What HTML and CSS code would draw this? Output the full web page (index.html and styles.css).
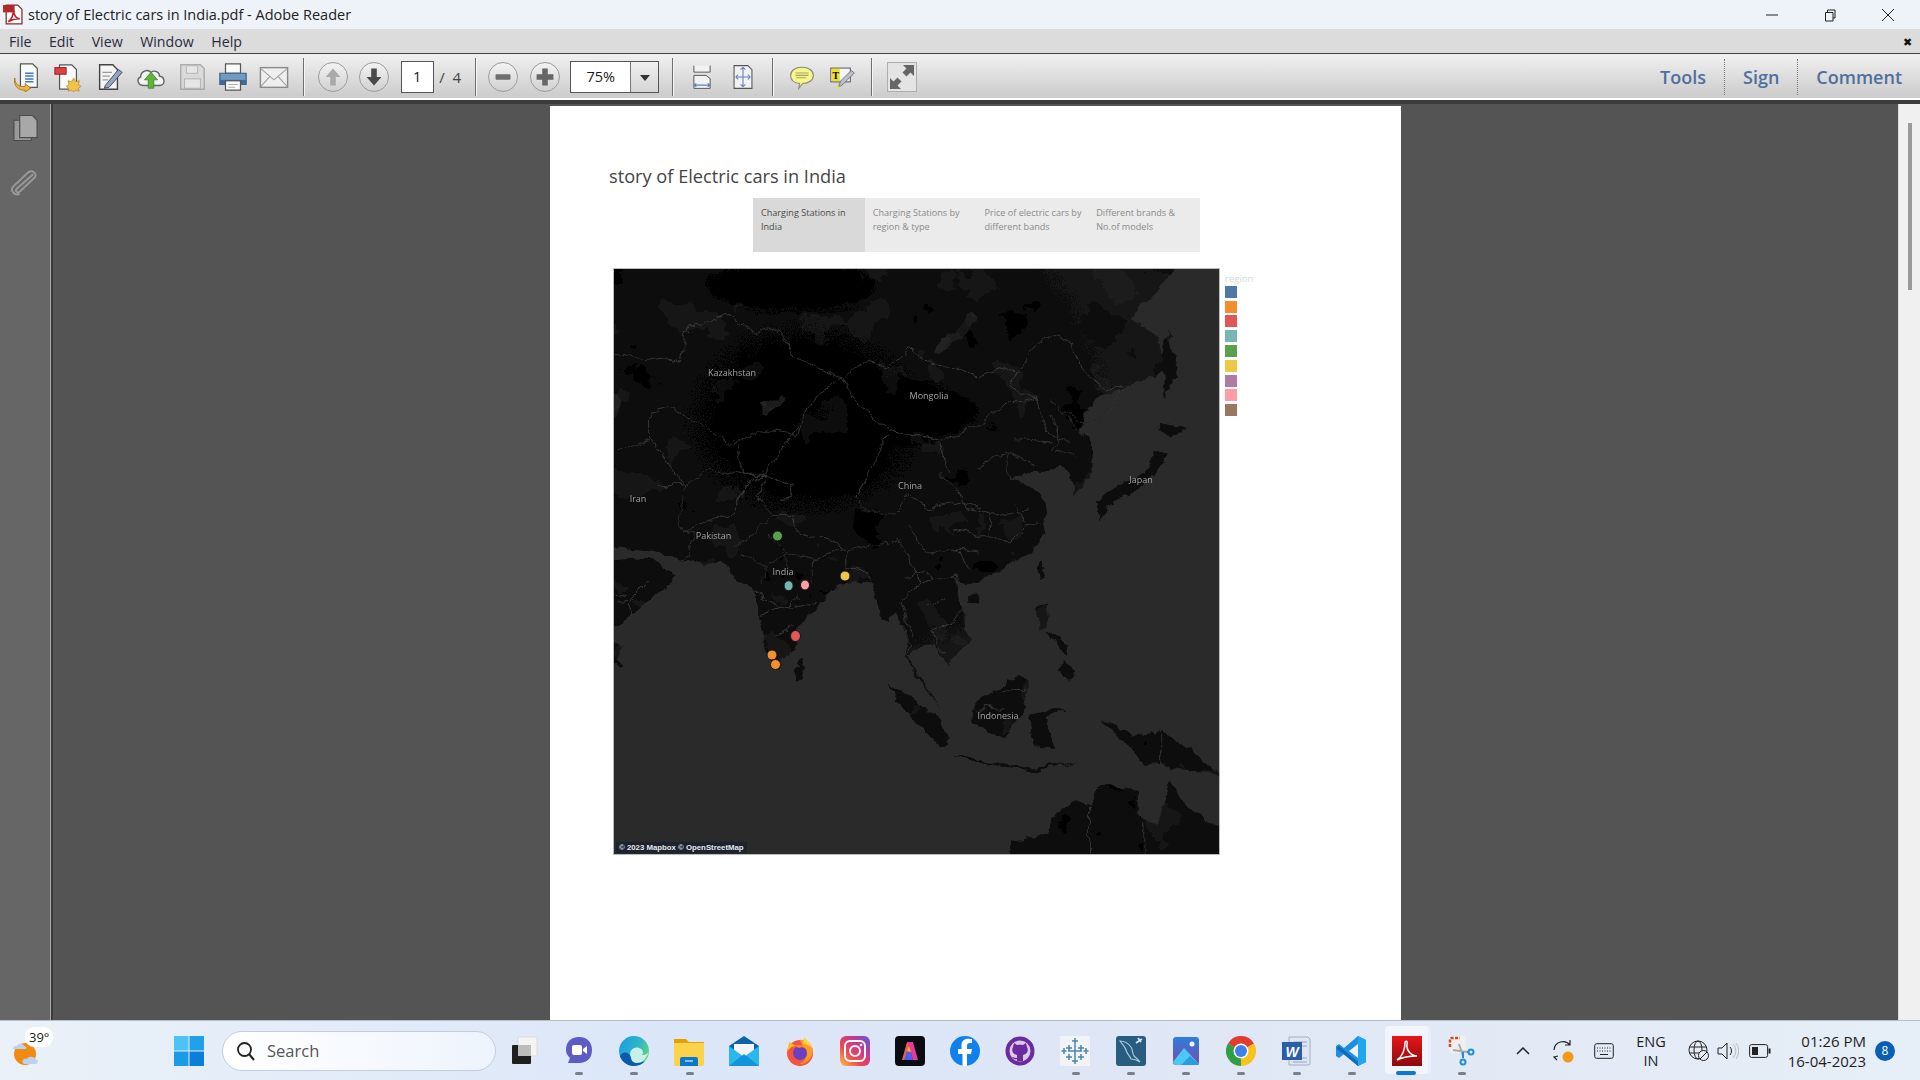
FILE: index.html
```html
<!DOCTYPE html>
<html lang="en">
<head>
    <meta charset="UTF-8">
    <title>story of Electric cars in India.pdf - Adobe Reader</title>
    <link rel="stylesheet" href="styles.css">
</head>
<body>
    <div class="window">
        <div class="titlebar">
            <svg class="pdf-icon" viewBox="0 0 20 20">
                <path d="M4 1h11l4 4v14H4z" fill="#fff" stroke="#8a2a2a" stroke-width="1.2"/>
                <rect x="1" y="1" width="11" height="7" fill="#b3262a"/>
                <path d="M6 17c3-2 5-7 5-11 0 5 3 8 6 8-4 0-8 1-11 3z" fill="none" stroke="#c01f24" stroke-width="1.5"/>
            </svg>
            <span class="title-text">story of Electric cars in India.pdf - Adobe Reader</span>
            <div class="win-controls">
                <svg viewBox="0 0 14 14"><path d="M1 7h12" stroke="#222" stroke-width="1" fill="none"/></svg>
                <svg viewBox="0 0 14 14"><path d="M2.5 4.5h7.5v8.500h-7.500zM4.500 4.500v-2.500h7.500v8h-2" stroke="#222" stroke-width="1" fill="none"/></svg>
                <svg viewBox="0 0 14 14"><path d="M1 1l12 12M13 1L1 13" stroke="#222" stroke-width="1" fill="none"/></svg>
            </div>
        </div>

        <div class="menubar">
            <span>File</span><span>Edit</span><span>View</span><span>Window</span><span>Help</span>
            <span class="menu-close">&#10006;</span>
        </div>

        <div class="toolbar">
            <div class="tool"><svg viewBox="0 0 32 32">
                <path d="M9 2h13l5 5v20H9z" fill="#fafafa" stroke="#555" stroke-width="1.300"/>
                <path d="M14 12h9M14 15h9M14 18h9M14 21h9" stroke="#3d78c9" stroke-width="1.600"/>
                <path d="M3 17c0 7 5 10 11 9v-3l6 5-6 4v-2C7 31 1 25 3 17z" fill="#f0b440" stroke="#9a6a10" stroke-width=".8"/>
            </svg></div>
            <div class="tool"><svg viewBox="0 0 32 32">
                <path d="M7 3h13l5 5v21H7z" fill="#fafafa" stroke="#555" stroke-width="1.300"/>
                <rect x="2" y="6" width="12" height="7" fill="#e04040" stroke="#8a1c1c"/>
                <path d="M22 17l2 4 4-1-1 4 3 2-3 2 1 3-4-1-2 2-2-2-4 1 1-3-3-2 3-2-1-4 4 1z" fill="#f3c24b" stroke="#b08420" stroke-width=".7"/>
            </svg></div>
            <div class="tool"><svg viewBox="0 0 32 32">
                <path d="M6 3h14l5 5v21H6z" fill="#f5f5f5" stroke="#444" stroke-width="1.500"/>
                <path d="M9 11h10M9 15h8M9 19h6" stroke="#999" stroke-width="1.300"/>
                <path d="M12 25L26 8l4 3-14 16-5 1z" fill="#8fa8c4" stroke="#445" stroke-width="1"/>
            </svg></div>
            <div class="tool"><svg viewBox="0 0 32 32">
                <path d="M8 25C2 25 0 18 5 16c0-6 7-9 11-5 4-3 9 0 9 4 6 1 7 10 0 10z" fill="#f2f2f2" stroke="#666" stroke-width="1.500"/>
                <path d="M16 11l7 8h-4v9h-6v-9H9z" fill="#5fb43a" stroke="#3a8020" stroke-width=".8"/>
            </svg></div>
            <div class="tool faded"><svg viewBox="0 0 32 32">
                <path d="M4 3h21l4 4v22H4z" fill="#d8d8d8" stroke="#9a9a9a" stroke-width="1.500"/>
                <rect x="10" y="4" width="12" height="8" fill="#e8e8e8" stroke="#a5a5a5"/>
                <rect x="8" y="18" width="17" height="10" fill="#eaeaea" stroke="#a5a5a5"/>
            </svg></div>
            <div class="tool"><svg viewBox="0 0 32 32">
                <rect x="8" y="2" width="16" height="10" fill="#fafafa" stroke="#555" stroke-width="1.300"/>
                <path d="M2 12h28v12H2z" fill="#6f9bc4" stroke="#3e5f80" stroke-width="1.300"/>
                <path d="M2 19h28v5H2z" fill="#3f6a96"/>
                <rect x="8" y="20" width="16" height="10" fill="#fafafa" stroke="#555" stroke-width="1.300"/>
                <path d="M11 24h10M11 27h7" stroke="#aaa"/>
            </svg></div>
            <div class="tool"><svg viewBox="0 0 32 32">
                <rect x="1.500" y="6" width="29" height="21" fill="#efefef" stroke="#8a8a8a" stroke-width="1.500"/>
                <path d="M2 7l14 12L30 7M2 26l10-11M30 26L20 15" fill="none" stroke="#a0a0a0" stroke-width="1.200"/>
            </svg></div>
            <i class="sep first-sep"></i>
            <div class="tool round faded-round"><svg viewBox="0 0 30 30"><path d="M15 6l8 9h-5v9h-6v-9H7z" fill="#a9a9a9"/></svg></div>
            <div class="tool round"><svg viewBox="0 0 30 30"><path d="M15 24l-8-9h5V6h6v9h5z" fill="#4a4a4a"/></svg></div>
            <div class="page-box">1</div>
            <span class="page-count">/ 4</span>
            <i class="sep"></i>
            <div class="tool round faded-round zoom-first"><svg viewBox="0 0 30 30"><rect x="7" y="12" width="16" height="6" rx="1" fill="#6e6e6e"/></svg></div>
            <div class="tool round faded-round"><svg viewBox="0 0 30 30"><path d="M12 6h6v6h6v6h-6v6h-6v-6H6v-6h6z" fill="#666"/></svg></div>
            <div class="zoom-box">
                <span class="zoom-value">75%</span>
                <span class="zoom-arrow"></span>
            </div>
            <i class="sep"></i>
            <div class="tool small"><svg viewBox="0 0 32 32">
                <path d="M6 2v8h20V2M6 14h15l5 4v12H6z" fill="#f2f2f2" stroke="#555" stroke-width="1.200"/>
                <path d="M6 26h20M6 26l3-2M6 26l3 2M26 26l-3-2M26 26l-3 2" stroke="#5d80bb" fill="none" stroke-width="1.300"/>
            </svg></div>
            <div class="tool small"><svg viewBox="0 0 32 32">
                <path d="M5 2h17l5 5v23H5z" fill="#f2f2f2" stroke="#555" stroke-width="1.300"/>
                <path d="M16 4v24M7 16h18M16 4l-3 3M16 4l3 3M16 28l-3-3M16 28l3-3M7 16l3-3M7 16l3 3M25 16l-3-3M25 16l-3 3" stroke="#5d80bb" fill="none" stroke-width="1.300"/>
            </svg></div>
            <i class="sep"></i>
            <div class="tool small"><svg viewBox="0 0 32 32">
                <path d="M16 4c8 0 14 4 14 10s-6 10-13 10l-5 6 1-6C6 23 2 19 2 14 2 8 8 4 16 4z" fill="#f7f590" stroke="#8a8a70" stroke-width="1.300"/>
                <path d="M8 11h16M8 14h16M9 17h12" stroke="#a6a45a" stroke-width="1.300"/>
            </svg></div>
            <div class="tool small"><svg viewBox="0 0 32 32">
                <rect x="1" y="5" width="24" height="17" fill="#f5f5f5" stroke="#555" stroke-width="1.200"/>
                <rect x="2" y="6" width="10" height="15" fill="#f0e020"/>
                <text x="7" y="18" class="t-glyph">T</text>
                <path d="M10 29l3-8 13-13 4 3-14 14z" fill="#b9c0c9" stroke="#666"/>
                <circle cx="10" cy="29" r="2" fill="#e8df50"/>
            </svg></div>
            <i class="sep"></i>
            <div class="tool expand"><svg viewBox="0 0 30 30">
                <rect x=".5" y=".5" width="29" height="29" fill="#e4e4e4" stroke="#adadad"/>
                <path d="M27 3v11l-3.500-3.500-4 4-4-4 4-4L16 3zM3 27V16l3.500 3.500 4-4 4 4-4 4L14 27z" fill="#666"/>
            </svg></div>
            <div class="side-links">
                <span class="side-link">Tools</span>
                <span class="side-link">Sign</span>
                <span class="side-link">Comment</span>
            </div>
        </div>

        <div class="workspace">
            <div class="nav-panel">
                <svg class="nav-pages" viewBox="0 0 28 28">
                    <path d="M2 6h18v21H2z" fill="#9a9a9a" stroke="#4c4c4c" stroke-width="1.200"/>
                    <path d="M8 1h13l5 5v18H8z" fill="#a8a8a8" stroke="#4c4c4c" stroke-width="1.200"/>
                </svg>
                <svg class="nav-clip" viewBox="0 0 28 28">
                    <path d="M24 6L7 21c-2 2 0 5 3 3L26 9c2-4-3-8-7-5L3 19c-3 4 2 10 7 7" fill="none" stroke="#999" stroke-width="2"/>
                </svg>
            </div>
            <div class="viewer">
                <div class="pdf-page">
                    <h1 class="story-title">story of Electric cars in India</h1>
                    <div class="story-tabs">
                        <div class="story-tab active">Charging Stations in India</div>
                        <div class="story-tab">Charging Stations by region &amp; type</div>
                        <div class="story-tab">Price of electric cars by different bands</div>
                        <div class="story-tab">Different brands &amp; No.of models</div>
                    </div>
                    <div class="viz">
                        <div class="map-frame">
                            <svg class="map" viewBox="614 269 605 585">
                                <defs>
                                    <radialGradient id="landShade" gradientUnits="userSpaceOnUse" cx="500" cy="-100" r="950">
                                        <stop offset="0" stop-color="#0e0e0e"/>
                                        <stop offset=".55" stop-color="#151515"/>
                                        <stop offset="1" stop-color="#1e1e1e"/>
                                    </radialGradient>
                                    <filter id="terrain" x="0" y="0" width="100%" height="100%">
                                        <feTurbulence type="fractalNoise" baseFrequency=".02" numOctaves="4" seed="7" result="noise"/>
                                        <feColorMatrix in="noise" type="matrix" values="0 0 0 0 0  0 0 0 0 0  0 0 0 0 0  1.300 0 0 0 -.42" result="shade"/>
                                        <feComposite in="shade" in2="SourceAlpha" operator="in" result="dark"/>
                                        <feMerge><feMergeNode in="SourceGraphic"/><feMergeNode in="dark"/></feMerge>
                                    </filter>
                                    <filter id="rough" x="0" y="0" width="100%" height="100%">
                                        <feTurbulence type="turbulence" baseFrequency=".045" numOctaves="3" seed="3" result="wobble"/>
                                        <feDisplacementMap in="SourceGraphic" in2="wobble" scale="9" xChannelSelector="R" yChannelSelector="G"/>
                                    </filter>
                                    <filter id="soft" x="-50%" y="-50%" width="200%" height="200%"><feGaussianBlur stdDeviation="16"/></filter>
                                </defs>
                                <rect x="614" y="269" width="605" height="585" fill="#2a2a2a"/>
                                <g filter="url(#rough)">
                                    <g filter="url(#terrain)">
                                        <g transform="translate(600 450) scale(.408 .3333)">
                                            <path fill="url(#landShade)" d="M-30-590H1420L1400-542 1357-480 1293-400 1340-370 1367-340 1385-250 1300-200 1280-195 1210-160 1180-100 1170-60 1190-50 1205 0 1195 70 1160 130 1150 60 1120 40 1090 60 1040 60 1000 90 1050 100 1090 150 1085 230 1050 300 990 340 925 395 880 390 855 365 870 420 880 470 905 560 850 635 815 570 800 575 770 600 750 620 790 690 830 765 790 700 745 620 750 560 725 480 690 505 660 400 640 390 620 395 590 390 530 460 485 515 470 590 440 620 430 655 410 610 370 420 335 390 305 345 210 325 120 295 20 285-30 285z"/>
                                            <path fill="#141414" d="M-30 330 120 318 178 380 110 450 35 522-30 530z"/>
                                            <path fill="#171717" d="M-30 590 50 578 45 640-30 660z"/>
                                            <g fill="#171717">
                                                <path d="M485 618 500 655 497 678 482 686 473 650z"/>
                                                <path d="M700 695 760 738 830 800 856 880 830 885 770 810 725 745z"/>
                                                <path d="M855 905 960 940 1000 945 1060 950 1160 935 1070 958 990 950 900 930z"/>
                                                <path d="M905 772 945 735 1020 672 1048 700 1030 790 990 862 920 820z"/>
                                                <path d="M1055 785 1135 770 1085 800 1110 890 1060 892 1048 830z"/>
                                                <path d="M1220 800 1300 850 1370 838 1440 890 1540 990 1490 960 1400 950 1330 940 1290 880z"/>
                                                <path d="M985 1240 1010 1170 1090 1150 1110 1090 1160 1050 1200 1060 1215 1000 1310 1010 1310 1080 1360 1120 1392 990 1430 1060 1540 1150 1540 1240z"/>
                                                <path d="M1070 458 1095 458 1092 530 1072 530z"/>
                                                <path d="M1090 540 1142 580 1140 605 1105 570z"/>
                                                <path d="M1130 622 1160 660 1142 686 1120 650z"/>
                                                <path d="M1080 325 1088 360 1070 382z"/>
                                                <path d="M900 430 925 428 916 456 900 456z"/>
                                                <path d="M1350 0 1386 0 1380 40 1290 130 1222 172 1210 150 1240 115 1300 90 1340 50z"/>
                                                <path d="M1210 160 1236 170 1222 202z"/>
                                                <path d="M1365-90 1435-75 1395-50 1365-60z"/>
                                                <path d="M1390-370 1410-250 1385-160 1372-260z"/>
                                            </g>
                                            <g filter="url(#soft)" fill="#000" opacity=".5">
                                                <ellipse cx="650" cy="-120" rx="260" ry="70"/>
                                                <ellipse cx="520" cy="30" rx="140" ry="70"/>
                                                <ellipse cx="460" cy="-500" rx="200" ry="50"/>
                                            </g>
                                            <path class="lake" d="M905-420 918-405 880-340 830-295 810-300 850-345z"/>
                                            <path class="lake" d="M-30-180 40-175 50-120 20-90-30-100z"/>
                                            <path class="lake" d="M385-155 455-165 440-130 395-110z"/>
                                            <g class="borders">
                                                <path d="M35-295 71-295 103-270 156-280 194-270 204-330 199-365 315-410 347-380 379-355 432-370 475-280 496-275 550-240 586-225M586-225 655-270 698-250 756-310 804-260 879-250 921-225 974-250 1017-240 1070-330 1113-355 1155-330 1182-240 1230-190 1282-200 1240-110 1176-90 1130-120 1102-160"/>
                                                <path d="M586-225 634-130 709-65 836-35 932-80 953-120 1060-165 1007-190 1012-240"/>
                                                <path d="M586-225 528-170 485-80 475-50 390-65 305-20 252-80 162-130 119-115 119-40 35 0"/>
                                                <path d="M200 100 190 200 200 235 230 240 205 320M200 235 260 210 320 190 350 100 400 70 465 100 470 130 440 140M200 100 260 50 350 70 400 70M120-40 200 100M350 70 330-20M400 70 480-80M140 100 195 100"/>
                                                <path d="M320 290 380 230 420 190 470 190 480 240 580 270 600 300 640 290 730 260 750 310 780 400 730 450 760 560 750 620M400 80 380 130 420 190"/>
                                                <path d="M600 300 600 350 650 360 660 400M780 400 810 380 870 370 880 470 850 520 810 540 830 590 850 600M790 470 840 440M810 380 790 350 740 380"/>
                                                <path d="M340 310 400 340 450 300 520 320 590 290M370 420 440 470 530 450M390 490 450 470 480 430M430 550 470 520M440 300 470 370M520 320 510 400M410 240 450 300M400 340 390 400"/>
                                                <path d="M620 130 640 170 720 190 750 130 800 170 880 150 930 170M750 220 800 300 870 290 920 300M860 230 950 260 1000 270M900 170 960 190 1050 170M830 60 860 100 900 170M990 0 1000 90M920 50 990 0 1060 40M1000 270 1040 220 1080 210M1100-110 1120-40 1100 0M830-30 850 60M700-60 650 70 620 130M960 190 950 260M870 290 900 360M1040 220 1010 160"/>
                                                <path d="M1060-165 1090-60 1150-30M1010-40 1100-30M1110 0 1160 10M1130-120 1180-50"/>
                                                <path d="M35 450 70 445 115 390M65 450 75 490M-30 420 60 430"/>
                                                <path d="M985 720 1000 710 1040 715M915 775 985 770M1372 840 1372 955M1195 1060 1195 1210M1328 1110 1328 1210"/>
                                            </g>
                                        </g>
                                    </g>
                                </g>
                                <g class="map-labels">
                                    <text x="732" y="376">Kazakhstan</text>
                                    <text x="929" y="399">Mongolia</text>
                                    <text x="910" y="489">China</text>
                                    <text x="1141" y="483">Japan</text>
                                    <text x="638" y="502">Iran</text>
                                    <text x="713.500" y="539">Pakistan</text>
                                    <text x="783" y="575">India</text>
                                    <text x="998" y="719">Indonesia</text>
                                </g>
                                <g class="marks">
                                    <ellipse cx="777.500" cy="536" rx="5" ry="5" fill="#59a14f"/>
                                    <ellipse cx="845" cy="576" rx="5" ry="5" fill="#edc948"/>
                                    <ellipse cx="788.600" cy="585.700" rx="4.500" ry="5" fill="#76b7b2"/>
                                    <ellipse cx="805" cy="585" rx="4.500" ry="5" fill="#ff9da7"/>
                                    <ellipse cx="795.500" cy="636" rx="5" ry="5.500" fill="#e15759"/>
                                    <ellipse cx="772" cy="655" rx="5" ry="5" fill="#f28e2b"/>
                                    <ellipse cx="775.500" cy="664.500" rx="5" ry="5" fill="#f28e2b"/>
                                </g>
                            </svg>
                            <span class="attribution">&copy; 2023 Mapbox &copy; OpenStreetMap</span>
                        </div>
                        <div class="legend">
                            <div class="legend-title">region</div>
                            <i class="swatch c1"></i>
                            <i class="swatch c2"></i>
                            <i class="swatch c3"></i>
                            <i class="swatch c4"></i>
                            <i class="swatch c5"></i>
                            <i class="swatch c6"></i>
                            <i class="swatch c7"></i>
                            <i class="swatch c8"></i>
                            <i class="swatch c9"></i>
                        </div>
                    </div>
                </div>
            </div>
            <div class="scrollbar"><div class="thumb"></div></div>
        </div>

        <div class="taskbar">
            <div class="weather">
                <svg viewBox="0 0 32 32">
                    <circle cx="14" cy="17" r="11" fill="#f08a12"/>
                    <path d="M2 12c0-3 3-4 4-3 1-3 6-3 7 0 2 0 3 2 2 3z" fill="#bcd3f0"/>
                    <path d="M12 26c-2-3 2-5 4-4 1-3 7-3 8 0 3 0 4 4 1 5H13z" fill="#bcd3f0"/>
                </svg>
                <span class="temp">39&deg;</span>
            </div>
            <svg class="start" viewBox="0 0 30 30">
                <rect x="0" y="0" width="14.500" height="14.500" fill="#4cc2f5"/>
                <rect x="15.500" y="0" width="14.500" height="14.500" fill="#22a0ea"/>
                <rect x="0" y="15.500" width="14.500" height="14.500" fill="#1b9be6"/>
                <rect x="15.500" y="15.500" width="14.500" height="14.500" fill="#0a7fd8"/>
            </svg>
            <div class="search">
                <svg viewBox="0 0 20 20"><circle cx="8.500" cy="8.500" r="6.500" fill="none" stroke="#222" stroke-width="1.800"/><path d="M13 13l5 6" stroke="#222" stroke-width="2"/></svg>
                <span>Search</span>
            </div>
            <div class="apps">
                <div class="app"><svg viewBox="0 0 30 30">
                    <rect x="9" y="1" width="19" height="19" rx="1" fill="#f4f4f4" stroke="#dcdcdc"/>
                    <rect x="3" y="9" width="19" height="19" rx="1" fill="#1f1f1f"/>
                    <rect x="9" y="9" width="13" height="11" fill="#bdbdbd"/>
                </svg></div>
                <div class="app dot"><svg viewBox="0 0 30 30">
                    <path d="M15 1c9 0 13 6 13 13 0 8-5 13-13 13H4l2-5C3 19 2 17 2 14 2 6 7 1 15 1z" fill="#5d5bc4"/>
                    <rect x="8" y="9" width="10" height="10" rx="2" fill="#fff"/>
                    <path d="M19 13l4-3v8l-4-3z" fill="#fff"/>
                </svg></div>
                <div class="app dot"><svg viewBox="0 0 30 30">
                    <defs><linearGradient id="edgeGrad" x1="0" y1=".2" x2="1" y2=".6">
                        <stop offset="0" stop-color="#1b9de2"/><stop offset=".6" stop-color="#2cb7c8"/><stop offset="1" stop-color="#5fd67e"/>
                    </linearGradient></defs>
                    <circle cx="15" cy="15" r="15" fill="url(#edgeGrad)"/>
                    <path d="M12 22c-3-6 2-12 8-10 4 1 5 5 3 7 4 0 7-2 7-5-2 13-16 18-18 8z" fill="#c9efe9"/>
                    <path d="M1 20c3 10 17 14 25 5-6 3-14 3-14-3-1-6-8-8-11-2z" fill="#0c5aa8"/>
                </svg></div>
                <div class="app dot"><svg viewBox="0 0 30 30">
                    <path d="M0 3h12l3 3h15v22H0z" fill="#e0a208"/>
                    <path d="M0 7h30v21a2 2 0 0 1-2 2H2a2 2 0 0 1-2-2z" fill="#fad34a"/>
                    <path d="M8 21h14a2 2 0 0 1 2 2v7H6v-7a2 2 0 0 1 2-2z" fill="#0e78c8"/>
                    <rect x="11" y="24" width="8" height="2" fill="#7dc5f0"/>
                </svg></div>
                <div class="app"><svg viewBox="0 0 30 30">
                    <path d="M0 10L15 0l15 10v20H0z" fill="#0b62ad"/>
                    <path d="M5 8h20v12H5z" fill="#f4f4f4"/>
                    <path d="M0 10l15 11 15-11v20H0z" fill="#29b7ee"/>
                    <path d="M0 30l15-12 15 12z" fill="#1293dc"/>
                </svg></div>
                <div class="app"><svg viewBox="0 0 30 30">
                    <circle cx="15" cy="17" r="13" fill="#f6533f"/>
                    <path d="M15 4c5-1 11 4 13 9 0 8-5 15-13 15C22 24 24 16 18 11z" fill="#ff9a25"/>
                    <path d="M4 6c0 4-2 6-2 10 2-4 5-6 9-6z" fill="#ffbb28"/>
                    <path d="M19 0c1 4 7 6 8 12-3-3-6-4-9-4 0-3 1-5 1-8z" fill="#ffd43c"/>
                    <circle cx="15" cy="17" r="7" fill="#6a3fc4"/>
                    <path d="M10 10c3-2 9-1 11 3-3-2-5-2-7-1z" fill="#ff8a20"/>
                </svg></div>
                <div class="app"><svg viewBox="0 0 30 30">
                    <defs><linearGradient id="instaGrad" x1="0" y1="1" x2="1" y2="0">
                        <stop offset="0" stop-color="#fdc24a"/><stop offset=".35" stop-color="#ee4a4e"/><stop offset=".7" stop-color="#c0379a"/><stop offset="1" stop-color="#5a5dd2"/>
                    </linearGradient></defs>
                    <rect width="30" height="30" rx="6" fill="url(#instaGrad)"/>
                    <rect x="5" y="5" width="20" height="20" rx="5" fill="none" stroke="#fff" stroke-width="2"/>
                    <circle cx="15" cy="15" r="5" fill="none" stroke="#fff" stroke-width="2"/>
                    <circle cx="21" cy="9" r="1.300" fill="#fff"/>
                </svg></div>
                <div class="app"><svg viewBox="0 0 30 30">
                    <rect width="30" height="30" rx="4" fill="#0b0b12"/>
                    <path d="M12 6h6l-2 7-4 11H7z" fill="#f2613f"/>
                    <path d="M12 6h6l5 18h-5z" fill="#e6399b"/>
                    <path d="M12 15l4 1 2 8H9z" fill="#4b5ef0"/>
                    <path d="M12 15l2-5 2 6z" fill="#f5b32e"/>
                </svg></div>
                <div class="app"><svg viewBox="0 0 30 30">
                    <circle cx="15" cy="15" r="15" fill="#1080ea"/>
                    <path d="M17 30V18h4l1-5h-5v-3c0-2 1-3 3-3h2V3c-1 0-3-.300-4-.300-4 0-6.500 2.500-6.500 6.500v3.800H8v5h4.500v12z" fill="#fff"/>
                </svg></div>
                <div class="app"><svg viewBox="0 0 30 30">
                    <circle cx="15" cy="15" r="14.500" fill="#6b2a9e"/>
                    <circle cx="15" cy="15" r="10.500" fill="#d9cbe6"/>
                    <path d="M9 7l3 2c2-.500 4-.500 6 0l3-2 1 4c2 4 0 7-4 8v6h-6v-2c-3 1-4-1-5-2 2 0 2 1 5 1v-3c-4-1-6-4-4-8z" fill="#6b2a9e"/>
                </svg></div>
                <div class="app dot"><svg viewBox="0 0 30 30">
                    <rect width="30" height="30" fill="#f1f3f4"/>
                    <g stroke="#4a86ad" stroke-width="1.500">
                        <path d="M15 8v14M8 15h14M9 9v6M6 12h6M21 9v6M18 12h6M9 18v6M6 21h6M21 18v6M18 21h6M15 2v6M12 5h6M15 22v6M12 25h6M4 12v6M1.500 15h5M26 12v6M23.500 15h5"/>
                    </g>
                </svg></div>
                <div class="app dot"><svg viewBox="0 0 30 30">
                    <rect width="30" height="30" rx="3" fill="#285d80"/>
                    <path d="M4 5c4 0 8 2 11 6 2 3 1 6 3 9 2 2 4 3 6 6-3-2-6-3-9-3-1-3-4-5-5-9C9 10 6 8 4 5z" fill="none" stroke="#a9c7da" stroke-width="1.200"/>
                    <path d="M22 2l3 4M20 7l6-4" stroke="#d7e5ee" stroke-width="1.800"/>
                </svg></div>
                <div class="app dot"><svg viewBox="0 0 30 30">
                    <defs><linearGradient id="photoGrad" x1="0" y1="0" x2="0" y2="1">
                        <stop offset="0" stop-color="#2c7fd8"/><stop offset="1" stop-color="#7a4bb5"/>
                    </linearGradient></defs>
                    <rect x="2" y="1" width="26" height="28" rx="3" fill="url(#photoGrad)"/>
                    <circle cx="21" cy="8" r="2.500" fill="#f1f1f1"/>
                    <path d="M2 26l11-14 15 16-1 1H4z" fill="#4cc8f4"/>
                    <path d="M10 29l9-9 9 8-1 1z" fill="#2a9ce0"/>
                </svg></div>
                <div class="app dot"><svg viewBox="0 0 30 30">
                    <path d="M15 15L28 7.500A15 15 0 0 0 2 7.500z" fill="#e33b2e"/>
                    <path d="M15 15L2 7.500A15 15 0 0 0 15 30z" fill="#2f9e44"/>
                    <path d="M15 15L15 30A15 15 0 0 0 28 7.500z" fill="#f9c31e"/>
                    <circle cx="15" cy="15" r="7.500" fill="#fff"/>
                    <circle cx="15" cy="15" r="6" fill="#3f7fe8"/>
                </svg></div>
                <div class="app dot"><svg viewBox="0 0 30 30">
                    <path d="M8 1h19l2 2v25l-2 1H8z" fill="#dfe6f2" stroke="#9fb0c8"/>
                    <path d="M12 6h14M12 10h14M12 22h14M12 26h14" stroke="#8ea6cc"/>
                    <rect x="1" y="6" width="20" height="18" fill="#2a5ea8"/>
                    <text x="11" y="21" class="word-glyph">W</text>
                </svg></div>
                <div class="app dot"><svg viewBox="0 0 30 30">
                    <path d="M22 0l8 4v22l-8 4-14-12-5 4-3-2v-10l3-2 5 4z" fill="#1d8fe0"/>
                    <path d="M22 0v30l8-4V4z" fill="#1fa6ef"/>
                    <path d="M22 8l-9 7 9 7z" fill="#eef3fa"/>
                    <path d="M3 10l19 16v4L0 12z" fill="#0a6cbb"/>
                </svg></div>
                <div class="app active"><svg viewBox="0 0 30 30">
                    <defs><linearGradient id="acroGrad" x1="0" y1="0" x2="0" y2="1">
                        <stop offset="0" stop-color="#e8161a"/><stop offset="1" stop-color="#8c0a0c"/>
                    </linearGradient></defs>
                    <rect width="30" height="30" fill="url(#acroGrad)"/>
                    <path d="M5 24c5-3 8-10 8-17 0-3 3-2 2 1-1 6 4 12 10 12-7 0-14 1-20 4z" fill="none" stroke="#fff" stroke-width="1.500"/>
                </svg></div>
                <div class="app dot"><svg viewBox="0 0 30 30">
                    <rect x="2" y="0" width="17" height="17" rx="2" fill="#eef0ee"/>
                    <path d="M3 11V3a1 1 0 0 1 1-1h9" fill="none" stroke="#d9442f" stroke-width="2.500" stroke-dasharray="3 1.500"/>
                    <path d="M12 8l4 12M6 14l14 2" stroke="#a9a9a9" stroke-width="2"/>
                    <circle cx="24" cy="16" r="2.500" fill="none" stroke="#1f8fd8" stroke-width="2"/>
                    <circle cx="16" cy="26" r="2.500" fill="none" stroke="#1f8fd8" stroke-width="2"/>
                    <path d="M16 22v-6M20 16h2" stroke="#1f8fd8" stroke-width="2"/>
                </svg></div>
            </div>
            <div class="tray">
                <svg class="chevron" viewBox="0 0 14 8"><path d="M1 7l6-6 6 6" fill="none" stroke="#222" stroke-width="1.500"/></svg>
                <svg class="sync" viewBox="0 0 24 24">
                    <path d="M2 11a9 9 0 0 1 16-5M18 1v5h-5M5 21l-3-3 4-1" fill="none" stroke="#222" stroke-width="1.200"/>
                    <circle cx="16" cy="18" r="5.500" fill="#f39a12"/>
                </svg>
                <svg class="keyboard" viewBox="0 0 20 16">
                    <rect x=".7" y=".7" width="18.600" height="14.600" rx="2" fill="none" stroke="#222"/>
                    <path d="M3 5h14M3 8h14" stroke="#222" stroke-dasharray="1 1.500"/>
                    <path d="M6 11.500h8" stroke="#222"/>
                </svg>
                <div class="lang">ENG<br>IN</div>
                <svg class="globe" viewBox="0 0 22 22">
                    <circle cx="10" cy="10" r="9" fill="none" stroke="#222"/>
                    <ellipse cx="10" cy="10" rx="4" ry="9" fill="none" stroke="#222"/>
                    <path d="M1.500 7h17M1.500 13h17" stroke="#222"/>
                    <circle cx="15.500" cy="15.500" r="5" fill="#e6edf7" stroke="#222"/>
                    <path d="M12 19l7-7" stroke="#222"/>
                </svg>
                <svg class="volume" viewBox="0 0 22 20">
                    <path d="M1 7h4l5-5v16l-5-5H1z" fill="none" stroke="#222"/>
                    <path d="M13 6a6 6 0 0 1 0 8" fill="none" stroke="#222"/>
                    <path d="M16 3a10 10 0 0 1 0 14M19 2a13 13 0 0 1 0 16" fill="none" stroke="#bbb"/>
                </svg>
                <svg class="battery" viewBox="0 0 22 14">
                    <rect x=".6" y=".6" width="18" height="12.800" rx="2" fill="none" stroke="#222"/>
                    <rect x="3" y="3" width="6" height="8" fill="#222"/>
                    <rect x="19.500" y="4.500" width="2" height="5" fill="#222"/>
                </svg>
                <div class="clock">01:26 PM<br>16-04-2023</div>
                <span class="badge">8</span>
            </div>
        </div>
    </div>
</body>
</html>
```

FILE: styles.css
```css
* {
    box-sizing: border-box;
}
html, body {
    margin: 0;
    height: 100%;
    overflow: hidden;
}
body {
    font-family: "Open Sans", "Noto Sans", sans-serif;
    color: #1a1a1a;
}
svg {
    display: block;
}
.window {
    width: 1920px;
    height: 1080px;
    display: flex;
    flex-direction: column;
}

/* title bar */
.titlebar {
    height: 29px;
    background: #eef3fa;
    display: flex;
    align-items: center;
    padding-left: 2px;
}
.pdf-icon {
    width: 21px;
    height: 21px;
}
.title-text {
    margin-left: 5px;
    font-size: 14.5px;
    color: #222;
}
.win-controls {
    margin-left: auto;
    display: flex;
    align-items: center;
    gap: 44px;
    padding-right: 25px;
}
.win-controls svg {
    width: 14px;
    height: 14px;
}

/* menu */
.menubar {
    height: 25px;
    background: #dcdcdc;
    border-bottom: 1px solid #444;
    display: flex;
    align-items: center;
    padding-left: 9px;
    gap: 17.500px;
    font-size: 14.200px;
    color: #2a2a40;
}
.menu-close {
    margin-left: auto;
    margin-right: 8px;
    font-size: 11px;
    color: #111;
}

/* toolbar */
.toolbar {
    height: 50px;
    background: linear-gradient(#f1f1f1, #cdcdcd 90%, #cdcdcd 90%);
    border-bottom: 4px solid #3c3c3c;
    box-shadow: inset 0 -2px 0 #fff;
    display: flex;
    align-items: center;
    padding: 0 0 1px 6px;
}
.tool {
    width: 41.300px;
    display: flex;
    justify-content: center;
}
.tool svg {
    width: 30px;
    height: 30px;
}
.tool.faded {
    opacity: .75;
}
.tool.round svg {
    border-radius: 50%;
    border: 1.500px solid #9c9c9c;
    background: linear-gradient(#f3f3f3, #d0d0d0);
}
.faded-round svg {
    border-color: #b5b5b5;
}
.tool.small svg {
    width: 26px;
    height: 30px;
}
.tool.expand {
    width: 30px;
    margin-left: 7px;
}
.sep {
    width: 1px;
    height: 38px;
    background: #6f6f6f;
    box-shadow: 1px 0 0 #f5f5f5;
    margin: 0 8px;
}
.first-sep {
    margin-right: 8px;
}
.page-box {
    width: 33px;
    height: 32px;
    margin-left: 6px;
    background: #fff;
    border: 1px solid #555;
    display: flex;
    align-items: center;
    justify-content: center;
    font-size: 14.500px;
}
.page-count {
    width: 33px;
    text-align: center;
    font-size: 15px;
    word-spacing: 4px;
    color: #444;
}
.zoom-first {
    margin-left: -1px;
}
.zoom-box {
    width: 89px;
    height: 32px;
    margin-left: 5px;
    margin-right: 5px;
    display: flex;
    background: #fff;
    border: 1px solid #555;
}
.zoom-value {
    width: 60px;
    display: flex;
    align-items: center;
    justify-content: center;
    font-size: 14.500px;
    border-right: 1px solid #777;
}
.zoom-arrow {
    flex: 1;
    background: linear-gradient(#f0f0f0, #d5d5d5);
    position: relative;
}
.zoom-arrow::after {
    content: "";
    position: absolute;
    left: 9px;
    top: 13px;
    border: 5px solid transparent;
    border-top: 6px solid #333;
    border-bottom: 0;
}
.side-links {
    margin-left: auto;
    display: flex;
    align-items: center;
    height: 38px;
    padding-right: 18px;
}
.side-link {
    font-size: 18px;
    font-weight: 600;
    color: #4f6f9c;
    padding: 6px 18px;
    border-left: 1px dotted #777;
}
.side-link:first-child {
    border-left: 0;
}
.side-link:last-child {
    padding-right: 0;
}

/* document area */
.workspace {
    flex: 1;
    display: flex;
    min-height: 0;
    background: #545454;
}
.nav-panel {
    width: 53px;
    background: #666;
    border-right: 2px solid #3a3a3a;
    box-shadow: inset -1px 0 0 #a8a8a8;
    display: flex;
    flex-direction: column;
    align-items: flex-start;
    padding: 10px 0 0 12px;
}
.nav-pages {
    width: 27px;
    height: 28px;
}
.nav-clip {
    width: 27px;
    height: 28px;
    margin-top: 26px;
    margin-left: -2px;
}
.viewer {
    flex: 1;
    padding: 2px 0 0 497px;
    overflow: hidden;
}
.pdf-page {
    width: 851px;
    height: 100%;
    background: #fff;
    padding: 58px 0 0 59px;
}
.story-title {
    margin: 0;
    height: 34px;
    line-height: 24px;
    font-size: 18.200px;
    font-weight: 400;
    color: #444;
}
.story-tabs {
    margin-left: 144px;
    width: 447px;
    height: 54px;
    display: grid;
    grid-template-columns: repeat(4, 1fr);
    background: #ebebeb;
}
.story-tab {
    padding: 8px 6px 0 8px;
    font-size: 9.100px;
    line-height: 13.500px;
    color: #8a8a8a;
}
.story-tab.active {
    background: #d9d9d9;
    color: #4a4a4a;
}
.viz {
    margin: 17px 0 0 5px;
    display: flex;
}
.map-frame {
    position: relative;
    width: 605px;
    height: 585px;
    outline: 1px solid #bbb;
}
.map {
    width: 605px;
    height: 585px;
    filter: blur(.5px);
}
.lake {
    fill: #262626;
}
.borders path {
    fill: none;
    stroke: #3c3c3c;
    stroke-width: 1;
    vector-effect: non-scaling-stroke;
}
.map-labels text {
    font-size: 9px;
    fill: #a2a2a2;
    text-anchor: middle;
}
.marks ellipse {
    stroke: #151515;
    stroke-width: 1;
}
.attribution {
    position: absolute;
    left: 2px;
    bottom: 1px;
    padding: 1px 3px;
    font-family: "Liberation Sans", sans-serif;
    font-size: 7.800px;
    font-weight: 700;
    color: #e8e8e8;
    background: #1c2230;
}
.legend {
    margin-left: 6px;
    display: flex;
    flex-direction: column;
    align-items: flex-start;
    gap: 2.800px;
}
.legend-title {
    height: 14px;
    line-height: 20px;
    font-size: 9.500px;
    color: #d5d8de;
}
.swatch {
    width: 12px;
    height: 12px;
}
.c1 { background: #4e79a7; }
.c2 { background: #f28e2b; }
.c3 { background: #e15759; }
.c4 { background: #76b7b2; }
.c5 { background: #59a14f; }
.c6 { background: #edc948; }
.c7 { background: #b07aa1; }
.c8 { background: #ff9da7; }
.c9 { background: #9c755f; }
.scrollbar {
    width: 22px;
    background: #f0f0f0;
    border-left: 1px solid #ddd;
    padding: 19px 0 0 9px;
}
.thumb {
    width: 4px;
    height: 167px;
    background: #9a9a9a;
}

/* taskbar */
.taskbar {
    height: 60px;
    position: relative;
    border-top: 1px solid #b9bdc9;
    background: linear-gradient(90deg, #eaf1f8, #dbe6f8 35%, #e0e7f5 65%, #e6eef7);
    display: flex;
    align-items: center;
}
.weather {
    position: relative;
    width: 38px;
    height: 32px;
    margin-left: 11px;
}
.weather svg {
    width: 32px;
    height: 32px;
    margin-top: 2px;
}
.temp {
    position: absolute;
    left: 14px;
    top: -8px;
    padding: 0 4px;
    font-size: 13px;
    background: #fff;
    border-radius: 9px;
    line-height: 20px;
}
.start {
    width: 30px;
    height: 30px;
    margin-left: 125px;
}
.search {
    width: 274px;
    height: 40px;
    margin-left: 18px;
    border-radius: 20px;
    background: linear-gradient(90deg, #fff, #eef4fd);
    border: 1px solid #c3cde0;
    display: flex;
    align-items: center;
    padding-left: 13px;
    gap: 11px;
    font-size: 16.500px;
    color: #555;
}
.search svg {
    width: 20px;
    height: 20px;
}
.apps {
    display: flex;
    height: 100%;
    align-items: center;
}
.app {
    position: relative;
    width: 55.200px;
    height: 100%;
    display: flex;
    align-items: center;
    justify-content: center;
}
.app svg {
    width: 30px;
    height: 30px;
    z-index: 1;
}
.app.dot::after {
    content: "";
    position: absolute;
    left: 24px;
    bottom: 5px;
    width: 8px;
    height: 3px;
    border-radius: 2px;
    background: #7b7f86;
}
.app.active::before {
    content: "";
    position: absolute;
    left: 6px;
    right: 6px;
    top: 5px;
    bottom: 6px;
    border-radius: 4px;
    background: #f2f5fc;
    box-shadow: 3px 0 0 #eaeef8;
}
.app.active::after {
    content: "";
    position: absolute;
    left: 17px;
    width: 20px;
    bottom: 5px;
    height: 4px;
    border-radius: 2px;
    background: #0a78d4;
    z-index: 2;
}
.tray {
    position: absolute;
    left: 1516px;
    top: 0;
    right: 0;
    height: 100%;
    display: flex;
    align-items: center;
    font-size: 14.500px;
    color: #1e1e1e;
}
.chevron {
    width: 14px;
    height: 8px;
}
.sync {
    width: 24px;
    height: 24px;
    margin-left: 22px;
}
.keyboard {
    width: 20px;
    height: 16px;
    margin-left: 18px;
}
.lang {
    width: 40px;
    margin-left: 17px;
    text-align: center;
    line-height: 19px;
}
.globe {
    width: 22px;
    height: 22px;
    margin-left: 17px;
}
.volume {
    width: 22px;
    height: 20px;
    margin-left: 7px;
}
.battery {
    width: 22px;
    height: 14px;
    margin-left: 10px;
}
.clock {
    width: 90px;
    margin-left: 5px;
    text-align: right;
    font-size: 15px;
    line-height: 20px;
}
.badge {
    width: 20px;
    height: 20px;
    margin-left: 9px;
    border-radius: 50%;
    background: #0a5fb4;
    color: #fff;
    font-size: 12px;
    display: flex;
    align-items: center;
    justify-content: center;
}
.t-glyph {
    font-family: "Liberation Serif", serif;
    font-size: 12px;
    font-weight: 700;
    text-anchor: middle;
}
.word-glyph {
    font-family: "Liberation Sans", sans-serif;
    font-size: 14px;
    font-weight: 700;
    font-style: italic;
    fill: #fff;
    text-anchor: middle;
}
```
